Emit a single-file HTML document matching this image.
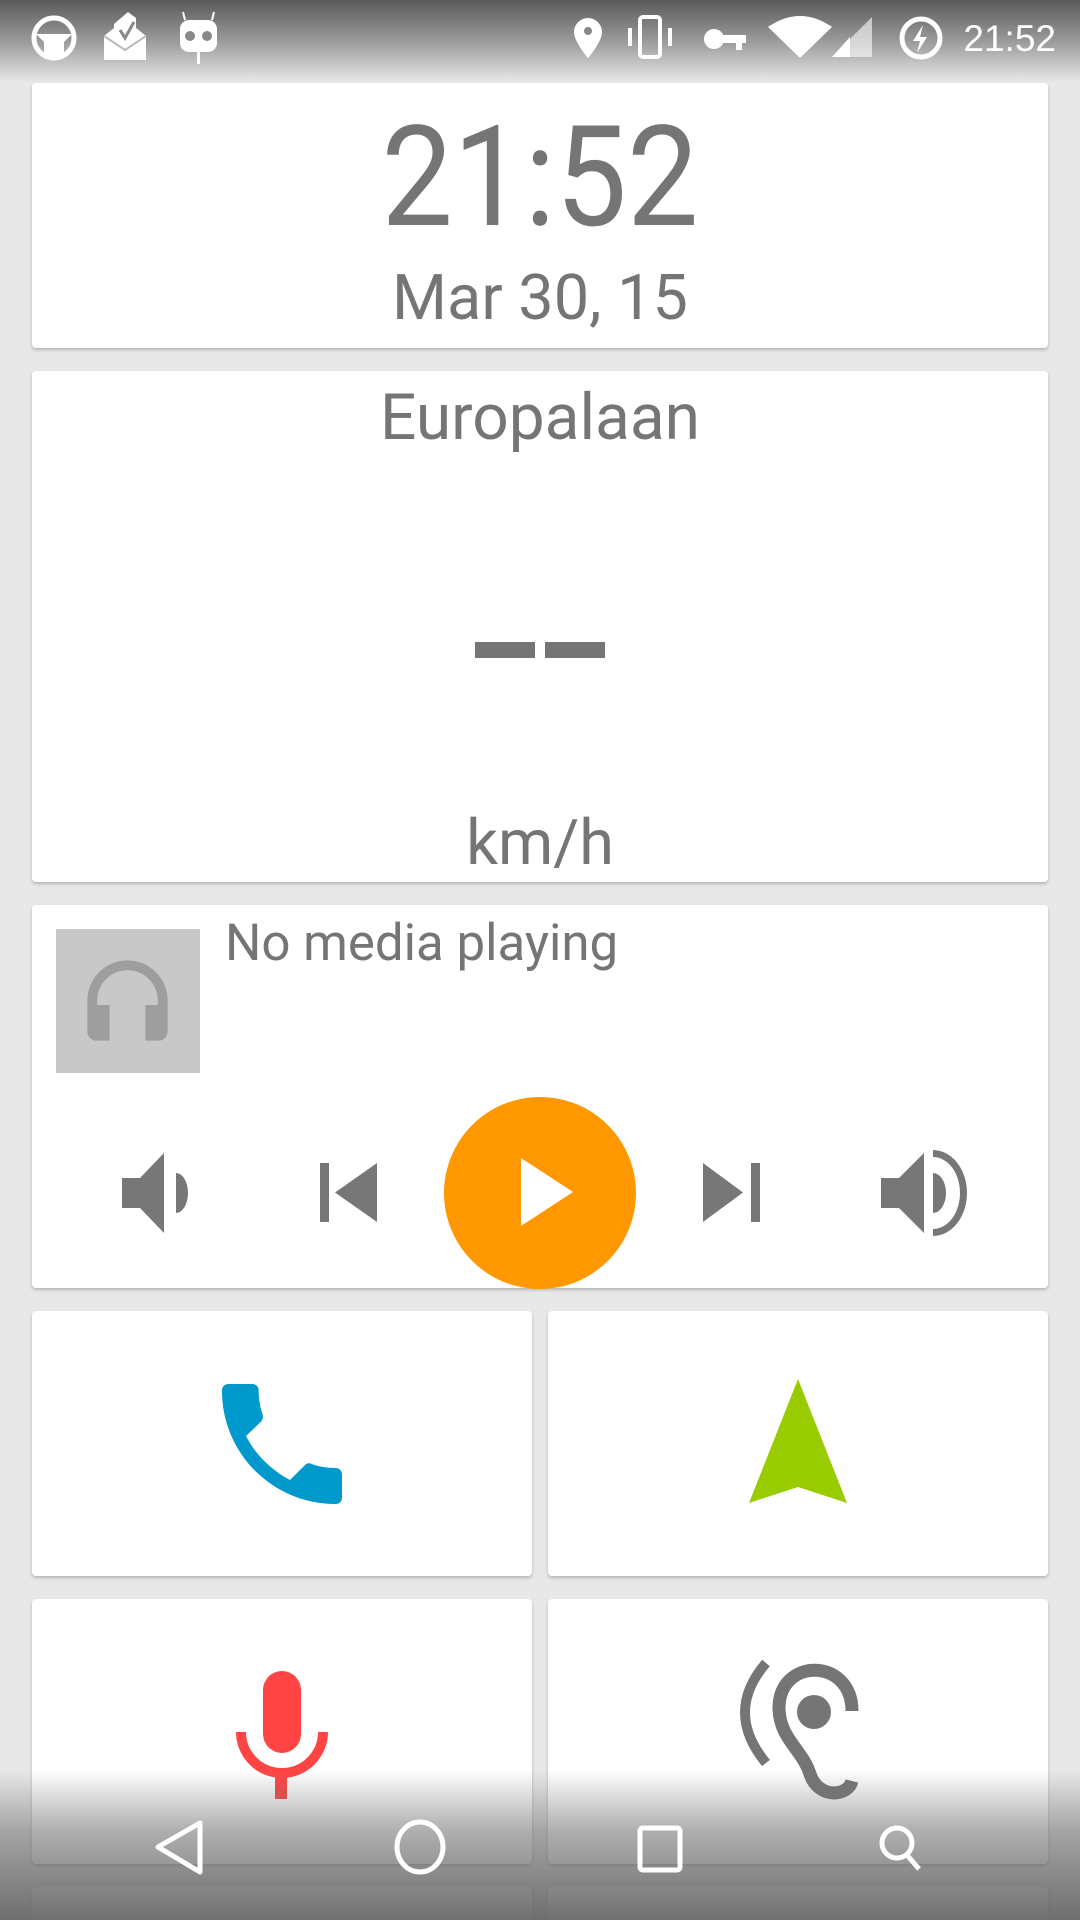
<!DOCTYPE html>
<html><head><meta charset="utf-8"><style>
html,body{margin:0;width:1080px;height:1920px;overflow:hidden}
body{background:#e8e8e8;position:relative;font-family:"Roboto","Liberation Sans",sans-serif;color:#757575}
#wrap{position:absolute;left:0;top:0;width:1080px;height:1920px;overflow:hidden}
.card{position:absolute;background:#fff;border-radius:4px;box-shadow:0 2px 3px rgba(0,0,0,.22)}
.t{position:absolute;left:0;right:0;text-align:center;white-space:nowrap}
svg{position:absolute}
</style></head><body><div id="wrap">
<div style="position:absolute;left:0;top:0;width:1080px;height:82px;background:linear-gradient(#5a5a5a,#9a9a9a 50%,#e8e8e8)"></div>

<div class="card" style="left:32px;top:83px;width:1016px;height:265px">
<div class="t" style="top:95px;font-size:140px;line-height:0;transform:scaleX(0.91)">21:52</div>
<div class="t" style="top:216px;font-size:63px;line-height:0">Mar 30, 15</div>
</div>
<div class="card" style="left:32px;top:371px;width:1016px;height:511px">
<div class="t" style="top:47px;font-size:64px;line-height:0">Europalaan</div>
<div style="position:absolute;left:443px;top:271px;width:60px;height:16px;background:#757575"></div>
<div style="position:absolute;left:513px;top:271px;width:60px;height:16px;background:#757575"></div>
<div class="t" style="top:473px;font-size:63px;line-height:0">km/h</div>
</div>
<div class="card" style="left:32px;top:905px;width:1016px;height:383px">
<div style="position:absolute;left:24px;top:24px;width:144px;height:144px;background:#c8c8c8"></div>
<svg style="left:42px;top:42px" width="107" height="107" viewBox="0 0 24 24"><path fill="#9e9e9e" d="M12 3a9 9 0 0 0-9 9v7c0 1.1.9 2 2 2h3v-8H5.2v-1a6.8 6.8 0 0 1 13.6 0v1H16v8h3c1.1 0 2-.9 2-2v-7a9 9 0 0 0-9-9z"/></svg>
<div style="position:absolute;left:193px;top:13px;font-size:51px;line-height:1">No media playing</div>
<svg style="left:90px;top:248px" width="80" height="80" viewBox="0 0 80 80"><path fill="#777" d="M0 25h18L42 0v80L18 55H0z"/><path fill="#777" d="M54 20a12 20 0 0 1 0 40z"/></svg>
<div style="position:absolute;left:288px;top:258px;width:9px;height:59px;background:#777"></div>
<svg style="left:303px;top:258px" width="42" height="59"><path fill="#777" d="M42 0v59L0 29.5z"/></svg>
<svg style="left:671px;top:258px" width="40" height="59"><path fill="#777" d="M0 0v59L40 29.5z"/></svg>
<div style="position:absolute;left:719px;top:258px;width:9px;height:59px;background:#777"></div>
<div style="position:absolute;left:412px;top:192px;width:192px;height:192px;border-radius:50%;background:#ff9800"></div>
<svg style="left:489px;top:253px" width="54" height="68"><path fill="#fff" d="M0 0v68L52 34z"/></svg>
<svg style="left:849px;top:245px" width="90" height="86" viewBox="0 0 90 86"><path fill="#777" d="M0 28h18L43 3v80L18 58H0z"/><path fill="#777" d="M52 23a13 20 0 0 1 0 40z"/><path fill="#777" d="M52 0a34 43 0 0 1 0 86v-7a27 36 0 0 0 0-72z"/></svg>
</div>

<div class="card" style="left:32px;top:1311px;width:500px;height:265px">
<svg style="left:170px;top:53px" width="160" height="160" viewBox="0 0 24 24"><path fill="#0099cc" d="M6.6 10.8c1.4 2.8 3.8 5.1 6.6 6.6l2.2-2.2c.3-.3.7-.4 1-.2 1.1.4 2.3.6 3.6.6.6 0 1 .4 1 1V20c0 .6-.4 1-1 1C10.6 21 3 13.4 3 4c0-.6.4-1 1-1h3.5c.6 0 1 .4 1 1 0 1.3.2 2.5.6 3.6.1.3 0 .7-.2 1z"/></svg>
</div>
<div class="card" style="left:548px;top:1311px;width:500px;height:265px">
<svg style="left:200px;top:68px" width="100" height="126"><path fill="#99cc00" d="M50 0L99 124L50 108L1 124z"/></svg>
</div>
<div class="card" style="left:32px;top:1599px;width:500px;height:265px">
<svg style="left:202px;top:72px" width="96" height="130" viewBox="0 0 96 130"><rect x="29" y="0" width="38" height="82" rx="19" fill="#ff4444"/><path d="M7 61a41 41 0 0 0 82 0" fill="none" stroke="#ff4444" stroke-width="10"/><rect x="41" y="102" width="12" height="26" fill="#ff4444"/></svg>
</div>
<div class="card" style="left:548px;top:1599px;width:500px;height:265px">
<svg style="left:0;top:0" width="500" height="265"><path d="M218 64Q176 113 218 164" fill="none" stroke="#757575" stroke-width="10"/><path d="M304 112C304 58 230 58 231 110C232 140 254 150 262 175C270 200 300 198 304 182" fill="none" stroke="#757575" stroke-width="13"/><circle cx="266" cy="113" r="17" fill="#757575"/></svg>
</div>
<div class="card" style="left:32px;top:1887px;width:500px;height:40px"></div>
<div class="card" style="left:548px;top:1887px;width:500px;height:40px"></div>

<div style="position:absolute;left:0;top:1770px;width:1080px;height:150px;background:linear-gradient(rgba(120,120,120,0),rgba(110,110,110,.55) 40%,rgba(100,100,100,.92))"></div>
<svg style="left:0;top:1810px" width="1080" height="80"><g fill="none" stroke="#fff" stroke-width="5"><path d="M200 13L158 37L200 62z" stroke-linejoin="round"/><ellipse cx="420" cy="37" rx="23" ry="25"/><rect x="640" y="18" width="40" height="42" rx="3"/><circle cx="897" cy="33" r="15"/><path d="M907 45l12 14"/></g></svg>

<svg style="left:0;top:0" width="1080" height="80"><g fill="#fff">
<circle cx="54" cy="38" r="20" fill="none" stroke="#fff" stroke-width="5"/><path d="M36 34h36l-8 8v14h-20v-14z"/>
<path d="M104 36l10-8v-4l14-12 8 6v10l10 8v24h-42z"/><path d="M120 30l5 8 9-16" stroke="#888" stroke-width="3" fill="none"/><path d="M104 36l21 14 21-14" stroke="#bbb" stroke-width="2" fill="none"/>
<rect x="180" y="20" width="37" height="32" rx="9"/><rect x="197" y="52" width="3" height="12"/><path d="M185 20l-2-8M212 20l2-8" stroke="#fff" stroke-width="2"/><circle cx="190" cy="36" r="5" fill="#888"/><circle cx="207" cy="36" r="5" fill="#888"/>
<path d="M588 18a14 14 0 0 1 14 14c0 10-14 26-14 26s-14-16-14-26a14 14 0 0 1 14-14z"/><circle cx="588" cy="31" r="4" fill="#888"/>
<rect x="640" y="17" width="20" height="40" rx="3" fill="none" stroke="#fff" stroke-width="4"/><rect x="628" y="28" width="4" height="18"/><rect x="668" y="28" width="4" height="18"/>
<circle cx="714" cy="39" r="10"/><rect x="718" y="35" width="28" height="8"/><rect x="736" y="40" width="6" height="10"/>
<path d="M768 27q32-22 64 0l-32 31z"/><path d="M832 57h40v-40z" opacity=".6"/><path d="M832 57h18v-20z"/>
<circle cx="921" cy="38" r="19" fill="none" stroke="#fff" stroke-width="5"/><path d="M923 25l-10 16h7l-3 12 10-16h-7z"/>
</g><text x="1056" y="51" text-anchor="end" fill="#fff" font-size="37" font-family="Liberation Sans">21:52</text></svg>
</div></body></html>
